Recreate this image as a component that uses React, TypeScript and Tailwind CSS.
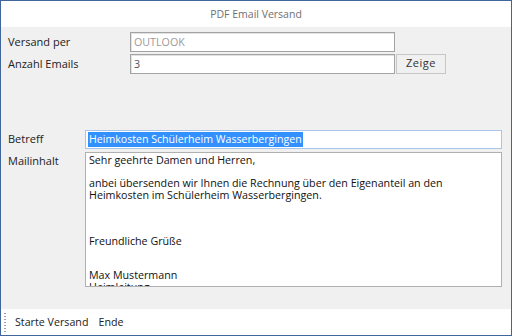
import React from "react";

const ui = { fontFamily: '"Open Sans", "Noto Sans", sans-serif' };

export default function App() {
  const lines = [
    "Sehr geehrte Damen und Herren,",
    "",
    "anbei übersenden wir Ihnen die Rechnung über den Eigenanteil an den",
    "Heimkosten im Schülerheim Wasserbergingen.",
    "",
    "",
    "",
    "Freundliche Grüße",
    "",
    "",
    "Max Mustermann",
    "Heimleitung",
  ];
  return (
    <div className="w-[512px] h-[336px] bg-white border border-[#41669c] flex flex-col overflow-hidden" style={ui}>
      <div className="h-[26px] shrink-0 bg-white flex items-center justify-center pt-[1px] text-[10.5px] text-[#707070]">
        PDF Email Versand
      </div>
      <div className="flex-1 bg-[#f0f0f0] flex flex-col pl-[7px]">
        <div className="flex items-center mt-[5px] h-[20px]">
          <div className="w-[122px] text-[11px] text-[#222]">Versand per</div>
          <div className="w-[265px] h-[20px] bg-white border border-[#a3a3a3] shadow-[inset_1px_1px_0_#e2e2e2] flex items-center pl-[3px] text-[10.7px] text-[#9a9a9a]">
            OUTLOOK
          </div>
        </div>
        <div className="flex items-center mt-[2px] h-[20px]">
          <div className="w-[122px] text-[11px] text-[#222]">Anzahl Emails</div>
          <div className="w-[265px] h-[20px] bg-white border border-[#a3a3a3] shadow-[inset_1px_1px_0_#e2e2e2] flex items-center pl-[3px] text-[10.7px] text-[#555]">
            3
          </div>
          <div className="ml-[1px] w-[50px] h-[20px] -mt-[1px] bg-[#f0f0f0] border border-[#c6c6c6] flex items-center justify-center text-[11px] text-[#333] tracking-[0.5px]">
            Zeige
          </div>
        </div>
        <div className="flex items-center mt-[56px] h-[19px]">
          <div className="w-[77px] text-[11px] text-[#222]">Betreff</div>
          <div className="w-[417px] h-[19px] bg-white border border-[#a9c6ea] flex items-center pl-[2px]">
            <span className="bg-[#3390ff] text-white text-[10.6px] leading-[15px] px-[1px]">
              Heimkosten Schülerheim Wasserbergingen
            </span>
          </div>
        </div>
        <div className="flex mt-[3px]">
          <div className="w-[77px] text-[11px] text-[#222] pt-[1px]">Mailinhalt</div>
          <div className="w-[417px] h-[135px] bg-white border border-[#b0b0b0] overflow-hidden pl-[3px] pt-[2px]">
            {lines.map((l, i) => (
              <div key={i} className="text-[10.7px] leading-[11.5px] h-[11.5px] text-[#111] whitespace-pre">
                {l || " "}
              </div>
            ))}
          </div>
        </div>
      </div>
      <div className="h-[26px] shrink-0 bg-white flex items-center text-[10.7px] text-[#222]">
        <div className="ml-[3px] w-[2px] h-[20px] bg-[radial-gradient(circle,#a0a0a0_0.8px,transparent_1px)] bg-[length:2px_3px]" />
        <span className="ml-[9px]">Starte Versand</span>
        <span className="ml-[10px]">Ende</span>
      </div>
    </div>
  );
}
